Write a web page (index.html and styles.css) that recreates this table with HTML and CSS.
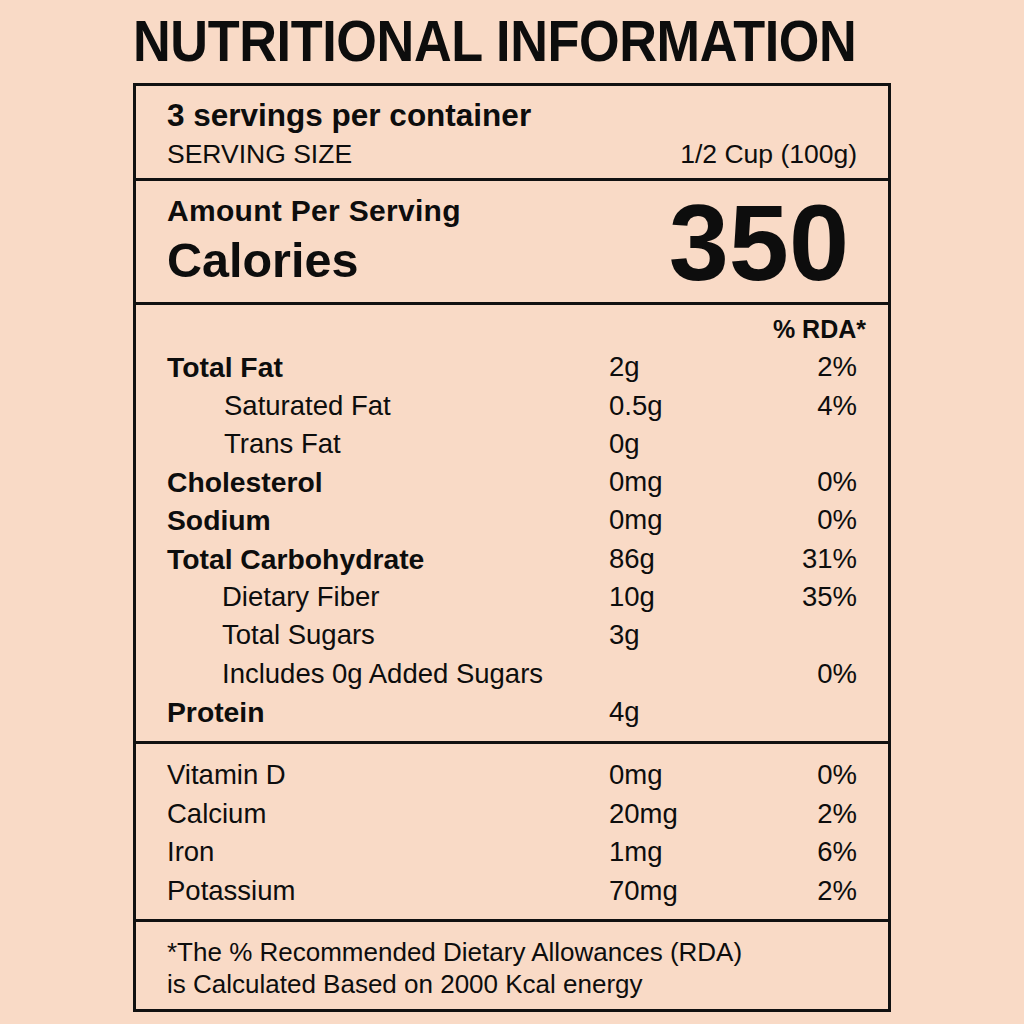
FILE: index.html
```html
<!DOCTYPE html>
<html lang="en">
<head>
<meta charset="utf-8">
<title>Nutritional Information</title>
<link rel="stylesheet" href="styles.css">
</head>
<body>
<main class="page">
  <h1 class="title">NUTRITIONAL INFORMATION</h1>
  <section class="label">
    <div class="sec sec-serving">
      <div class="servings">3 servings per container</div>
      <div class="size-row"><span>SERVING SIZE</span><span>1/2 Cup (100g)</span></div>
    </div>
    <div class="sec sec-cal">
      <div class="cal-left">
        <div class="amount">Amount Per Serving</div>
        <div class="calories">Calories</div>
      </div>
      <div class="cal-num">350</div>
    </div>
    <div class="sec sec-nutr">
      <div class="row head"><span></span><span></span><span class="pct rda">% RDA*</span></div>
      <div class="row b"><span>Total Fat</span><span>2g</span><span class="pct">2%</span></div>
      <div class="row"><span class="indent">Saturated Fat</span><span>0.5g</span><span class="pct">4%</span></div>
      <div class="row"><span class="indent">Trans Fat</span><span>0g</span><span class="pct"></span></div>
      <div class="row b"><span>Cholesterol</span><span>0mg</span><span class="pct">0%</span></div>
      <div class="row b"><span>Sodium</span><span>0mg</span><span class="pct">0%</span></div>
      <div class="row b"><span>Total Carbohydrate</span><span>86g</span><span class="pct">31%</span></div>
      <div class="row"><span class="indent2">Dietary Fiber</span><span>10g</span><span class="pct">35%</span></div>
      <div class="row"><span class="indent2">Total Sugars</span><span>3g</span><span class="pct"></span></div>
      <div class="row"><span class="indent2">Includes 0g Added Sugars</span><span></span><span class="pct">0%</span></div>
      <div class="row b"><span>Protein</span><span>4g</span><span class="pct"></span></div>
    </div>
    <div class="sec sec-vit">
      <div class="row"><span>Vitamin D</span><span>0mg</span><span class="pct">0%</span></div>
      <div class="row"><span>Calcium</span><span>20mg</span><span class="pct">2%</span></div>
      <div class="row"><span>Iron</span><span>1mg</span><span class="pct">6%</span></div>
      <div class="row"><span>Potassium</span><span>70mg</span><span class="pct">2%</span></div>
    </div>
    <div class="sec sec-foot">
      <p>*The % Recommended Dietary Allowances (RDA)<br>is Calculated Based on 2000 Kcal energy</p>
    </div>
  </section>
</main>
</body>
</html>
```
FILE: styles.css
```css
html, body {
  margin: 0;
  padding: 0;
}
body {
  background: #f9dac6;
  color: #0d0d0d;
  font-family: "Liberation Sans", Arial, sans-serif;
}
.page {
  width: 758px;
  margin: 0 auto;
  padding-top: 12px;
}
.title {
  margin: 0 0 13px 0;
  font-size: 58px;
  line-height: 58px;
  font-weight: 700;
  letter-spacing: -0.4px;
  white-space: nowrap;
  transform: scaleX(0.9);
  transform-origin: left center;
}
.label {
  border: 3px solid #111;
}
.sec {
  padding: 0 31px;
}
.sec + .sec {
  border-top: 3px solid #111;
}
.sec-serving {
  padding-top: 10px;
  padding-bottom: 4px;
}
.servings {
  font-size: 31.5px;
  font-weight: 700;
  line-height: 38px;
}
.size-row {
  display: flex;
  justify-content: space-between;
  font-size: 26.5px;
  line-height: 40px;
}
.sec-cal {
  display: flex;
  justify-content: space-between;
  align-items: center;
  padding-top: 13px;
  padding-bottom: 10px;
}
.amount {
  font-size: 30px;
  font-weight: 700;
  line-height: 34px;
  letter-spacing: 0.3px;
}
.calories {
  font-size: 48.5px;
  font-weight: 700;
  line-height: 64px;
}
.cal-num {
  font-size: 108px;
  font-weight: 700;
  line-height: 98px;
  margin-right: 8px;
}
.sec-nutr {
  padding-top: 5px;
  padding-bottom: 10px;
}
.row {
  display: grid;
  grid-template-columns: 442px 1fr auto;
  font-size: 27.5px;
  line-height: 38.3px;
}
.row.b span:first-child {
  font-weight: 700;
  font-size: 28.3px;
}
.row.head {
  font-weight: 700;
  font-size: 25px;
}
.pct {
  text-align: right;
}
.rda {
  margin-right: -9px;
}
.indent {
  padding-left: 57px;
}
.indent2 {
  padding-left: 55px;
}
.sec-vit {
  padding-top: 12px;
  padding-bottom: 8px;
}
.sec-vit .row {
  line-height: 38.6px;
}
.sec-foot {
  padding-top: 14px;
  padding-bottom: 9px;
}
.sec-foot p {
  margin: 0;
  font-size: 26px;
  line-height: 32px;
}
```
